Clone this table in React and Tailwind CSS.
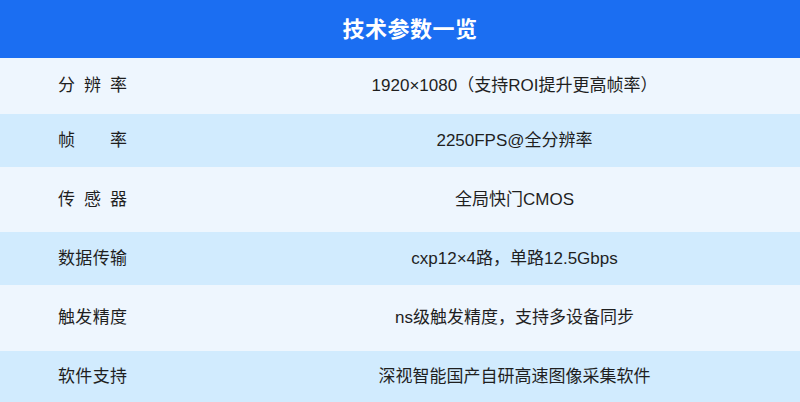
import React from 'react';

const rows = [
    { label: '分辨率', value: '1920×1080（支持ROI提升更高帧率）', h: 'h-[56px]', bg: 'bg-[#eef6fe]' },
    { label: '帧率', value: '2250FPS@全分辨率', h: 'h-[53px]', bg: 'bg-[#d1ebfe]' },
    { label: '传感器', value: '全局快门CMOS', h: 'h-[65px]', bg: 'bg-[#eef6fe]' },
    { label: '数据传输', value: 'cxp12×4路，单路12.5Gbps', h: 'h-[53px]', bg: 'bg-[#d1ebfe]' },
    { label: '触发精度', value: 'ns级触发精度，支持多设备同步', h: 'h-[66px]', bg: 'bg-[#eef6fe]' },
    { label: '软件支持', value: '深视智能国产自研高速图像采集软件', h: 'h-[51px]', bg: 'bg-[#d1ebfe]' },
];

const App = () => {
    return (
        <div
            className="w-[800px] h-[402px] overflow-hidden text-[#1f1f1f]"
            style={{ fontFamily: '"Liberation Sans", "Noto Sans CJK SC", sans-serif' }}
        >
            <div className="h-[58px] bg-[#1b6ef2] flex items-center justify-center pl-[20px]">
                <h2 className="text-white font-bold text-[22px] tracking-[0.5px]">技术参数一览</h2>
            </div>

            {rows.map((row) => (
                <div key={row.label} className={`grid grid-cols-[229px_1fr] items-center ${row.h} ${row.bg}`}>
                    <div className="pl-[58px]">
                        <div className="w-[69px] text-[17px] [text-align-last:justify]">{row.label}</div>
                    </div>
                    <div className="text-center text-[17px]">{row.value}</div>
                </div>
            ))}
        </div>
    );
};

export default App;
